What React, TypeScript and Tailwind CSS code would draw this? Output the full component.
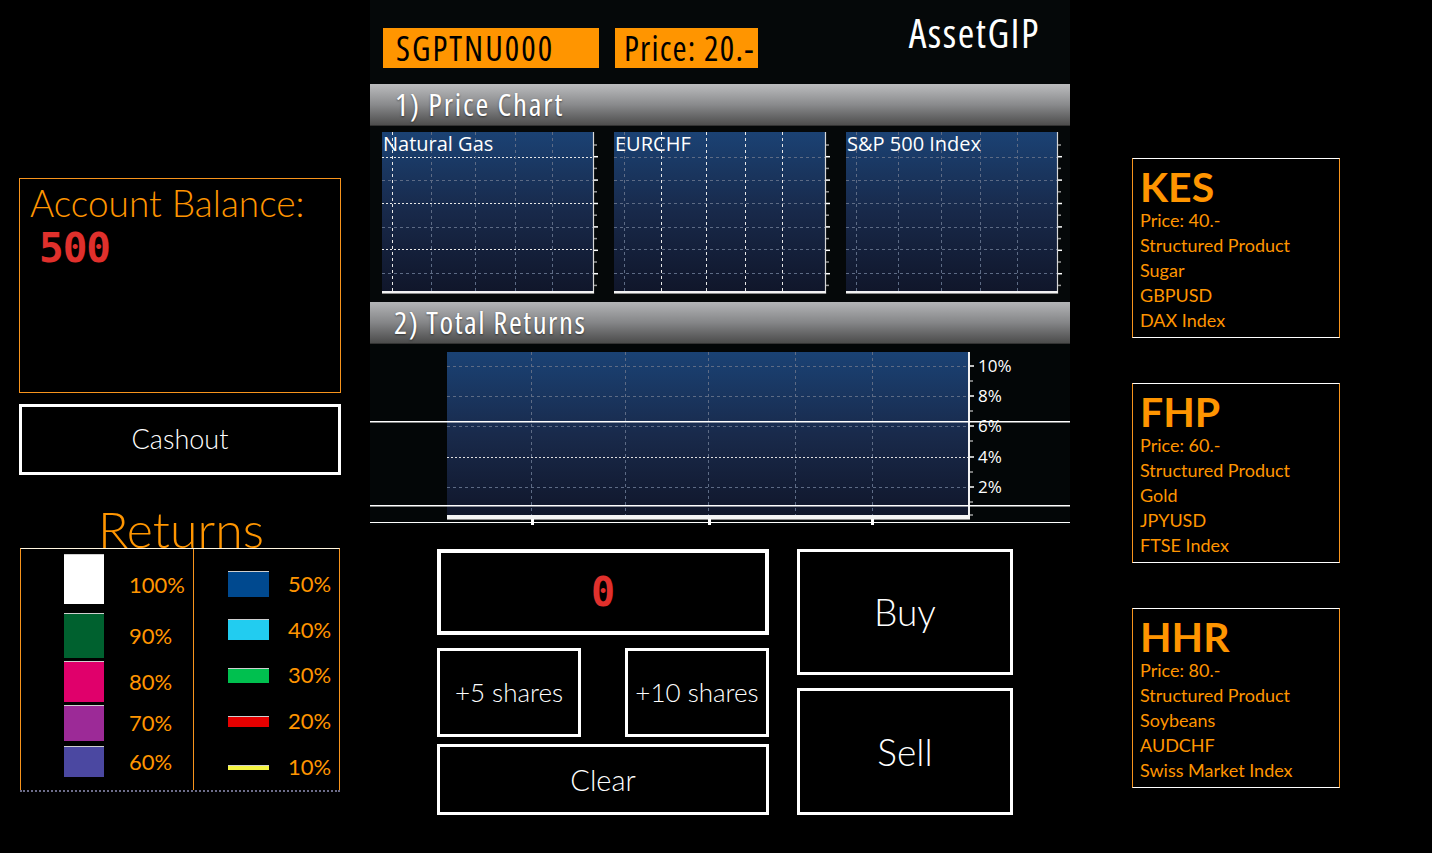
import React from "react";

type ChartProps = {
  id: string;
  label: string;
  brightH: boolean[];
  vx: number[];
  brightV: boolean[];
};

const H_LINES = [25, 48, 71, 95, 117, 141];

function PriceChart({ id, label, brightH, vx, brightV }: ChartProps) {
  const ticks: number[] = [];
  for (let i = 0; i < 13; i++) ticks.push(13 + i * 11.7);
  return (
    <div className="relative w-[216px] h-[162px]">
      <svg width="216" height="162" viewBox="0 0 216 162" className="block">
        <defs>
          <linearGradient id={id} x1="0" y1="0" x2="0" y2="1">
            <stop offset="0" stopColor="#1b4274" />
            <stop offset="0.5" stopColor="#18294a" />
            <stop offset="1" stopColor="#10162a" />
          </linearGradient>
        </defs>
        <rect x="0" y="0" width="211" height="160" fill={`url(#${id})`} />
        {H_LINES.map((y, i) => (
          <line
            key={"h" + i}
            x1="0"
            x2="211"
            y1={y + 0.5}
            y2={y + 0.5}
            stroke={brightH[i] ? "#e8e8e8" : "#5d6b85"}
            strokeWidth="1"
            strokeDasharray={brightH[i] ? "2 2" : "3 3"}
          />
        ))}
        {vx.map((x, i) => (
          <line
            key={"v" + i}
            x1={x + 0.5}
            x2={x + 0.5}
            y1="0"
            y2="160"
            stroke={brightV[i] ? "#e8e8e8" : "#5d6b85"}
            strokeWidth="1"
            strokeDasharray="3 3"
          />
        ))}
        <line x1="211.5" x2="211.5" y1="0" y2="162" stroke="#d8d8d8" strokeWidth="1.2" />
        {ticks.map((y, i) => (
          <line
            key={"t" + i}
            x1="212"
            x2={i % 2 === 0 ? 215 : 216}
            y1={y}
            y2={y}
            stroke={i % 2 === 0 ? "#9a9a9a" : "#ffffff"}
            strokeWidth="1.5"
          />
        ))}
        <rect x="0" y="159" width="212" height="2" fill="#f2f2f2" />
        <rect x="0" y="161" width="212" height="1" fill="#8a8a8a" />
      </svg>
      <div className="absolute left-[1px] top-[0px] text-white text-[20px] leading-[24px] font-['Open_Sans',sans-serif] font-medium whitespace-nowrap">
        {label}
      </div>
    </div>
  );
}

function ReturnsChart() {
  const labels = [
    { y: 22, t: "10%" },
    { y: 52, t: "8%" },
    { y: 82, t: "6%" },
    { y: 113, t: "4%" },
    { y: 143, t: "2%" },
  ];
  const minor = [37, 67, 97, 128, 158, 171];
  const vx = [161, 255, 338, 425, 502];
  return (
    <svg width="700" height="181" viewBox="0 0 700 181" className="block">
      <defs>
        <linearGradient id="retgrad" x1="0" y1="0" x2="0" y2="1">
          <stop offset="0" stopColor="#1a4275" />
          <stop offset="0.5" stopColor="#192a4b" />
          <stop offset="1" stopColor="#10162a" />
        </linearGradient>
      </defs>
      <rect x="0" y="0" width="700" height="181" fill="#030607" />
      <rect x="77" y="8" width="521" height="165" fill="url(#retgrad)" />
      {[22, 52, 82, 143].map((y) => (
        <line key={"rh" + y} x1="77" x2="598" y1={y + 0.5} y2={y + 0.5} stroke="#5d6b85" strokeDasharray="3 3" />
      ))}
      <line x1="77" x2="598" y1="113.5" y2="113.5" stroke="#e0e0e0" strokeDasharray="2 2" />
      {vx.map((x) => (
        <line key={"rv" + x} x1={x + 0.5} x2={x + 0.5} y1="8" y2="172" stroke="#5d6b85" strokeDasharray="3 3" />
      ))}
      <rect x="598" y="8" width="2" height="168" fill="#f2f2f2" />
      {labels.map((l) => (
        <g key={l.t}>
          <line x1="600" x2="604" y1={l.y} y2={l.y} stroke="#ffffff" strokeWidth="1.5" />
          <text
            x="608"
            y={l.y + 6}
            fill="#ffffff"
            fontSize="17"
            fontFamily="'Open Sans', sans-serif"
            style={{ fontStretch: "90%" }}
          >
            {l.t}
          </text>
        </g>
      ))}
      {minor.map((y) => (
        <line key={"m" + y} x1="600" x2="603" y1={y} y2={y} stroke="#a0a0a0" strokeWidth="1.5" />
      ))}
      <rect x="77" y="171" width="523" height="4" fill="#f4f4f4" />
      <rect x="77" y="175" width="523" height="1" fill="#8a8a8a" />
      {[161, 338, 501].map((x) => (
        <rect key={"bt" + x} x={x} y="175" width="3" height="6" fill="#ffffff" />
      ))}
      <rect x="0" y="77" width="700" height="1.5" fill="#ffffff" />
      <rect x="0" y="161" width="700" height="1.5" fill="#ffffff" />
      <rect x="0" y="178" width="700" height="1" fill="#ffffff" />
    </svg>
  );
}

function AssetCard({ code, lines }: { code: string; lines: string[] }) {
  return (
    <div className="h-[180px] border-y border-y-white border-x border-x-[#f7941d] pl-[7px] pt-[7px] text-[#ff9500]">
      <div className="text-[41px] leading-[42px] font-bold font-['Lato',sans-serif]">{code}</div>
      <div className="flex flex-col">
        {lines.map((l) => (
          <div key={l} className="text-[18px] leading-[25px] font-['Lato',sans-serif] whitespace-nowrap">
            {l}
          </div>
        ))}
      </div>
    </div>
  );
}

const legendLeft = [
  { c: "#ffffff", h: 50, mt: 5, t: "100%", lp: 12 },
  { c: "#00612f", h: 45, mt: 9, t: "90%", lp: 0 },
  { c: "#e0006b", h: 41, mt: 3, t: "80%", lp: 0 },
  { c: "#9c2a97", h: 36, mt: 3, t: "70%", lp: 0 },
  { c: "#4b48a1", h: 31, mt: 5, t: "60%", lp: 0 },
];

const legendRight = [
  { c: "#00498f", h: 26, t: "50%" },
  { c: "#22ccf0", h: 21, t: "40%" },
  { c: "#00c04f", h: 15, t: "30%" },
  { c: "#e60000", h: 11, t: "20%" },
  { c: "#f5f542", h: 5, t: "10%" },
];

export default function App() {
  const cond = "font-['Open_Sans',sans-serif] [font-stretch:75%]";
  return (
    <div className="w-[1432px] h-[853px] bg-black flex overflow-hidden font-['Lato',sans-serif]">
      {/* Left column */}
      <div className="ml-[19px] w-[322px] pt-[178px] flex flex-col shrink-0">
        <div className="h-[215px] border border-[#f7941d] pl-[10px] pt-[2px]">
          <div className="text-[#ff9500] text-[37px] font-light leading-[44px] whitespace-nowrap">Account Balance:</div>
          <div className="ml-[9px] mt-[4px] text-[#e0302c] font-['DejaVu_Sans_Mono',monospace] font-bold text-[41px] leading-[38px] tracking-[-1px]">
            500
          </div>
        </div>
        <button className="mt-[11px] h-[71px] bg-black border-[3px] border-white text-white text-[27px] font-light flex items-center justify-center">
          Cashout
        </button>
        <div className="h-[73px] flex items-end justify-center">
          <span className="relative top-[9px] z-10 ml-[2px] text-[#ff9500] text-[50px] font-light leading-[56px]">Returns</span>
        </div>
        <div className="ml-[1px] w-[320px] h-[244px] flex flex-col">
          <div className="h-[242px] border-t border-t-[#fff6e0] border-x border-x-[#f7941d] flex">
            <div className="w-[173px] border-r border-r-[#f7941d] pl-[43px] flex flex-col">
              {legendLeft.map((r) => (
                <div key={r.t} className="flex items-center" style={{ marginTop: r.mt }}>
                  <div className="w-[40px] border-t border-t-[#cfcfcf]" style={{ height: r.h, background: r.c }} />
                  <div className="ml-[25px] text-[#ff9500] text-[22px] leading-[26px]" style={{ paddingTop: r.lp }}>
                    {r.t}
                  </div>
                </div>
              ))}
            </div>
            <div className="flex-1 pl-[34px] pt-[12px] flex flex-col">
              {legendRight.map((r) => (
                <div key={r.t} className="h-[46px] flex items-center">
                  <div className="w-[41px] border-t border-t-[#cfcfcf]" style={{ height: r.h, background: r.c }} />
                  <div className="ml-[19px] text-[#ff9500] text-[22px] leading-[26px]">{r.t}</div>
                </div>
              ))}
            </div>
          </div>
          <div className="h-[2px] border-b-2 border-dotted border-b-[#6d6d8a]" />
        </div>
      </div>

      {/* Center column */}
      <div className="ml-[29px] w-[700px] shrink-0 flex flex-col">
        <div className="h-[84px] bg-[#050809] flex items-start">
          <div className={`ml-[13px] mt-[28px] w-[216px] h-[40px] bg-[#ff9500] text-black text-[34px] tracking-[2px] leading-[40px] pl-[13px] whitespace-nowrap ${cond}`}>
            SGPTNU000
          </div>
          <div className={`ml-[16px] mt-[28px] w-[143px] h-[40px] bg-[#ff9500] text-black text-[34px] tracking-[1.2px] leading-[40px] pl-[9px] whitespace-nowrap ${cond}`}>
            Price: 20.-
          </div>
          <div className={`ml-auto mr-[30px] mt-[10px] text-white text-[40px] tracking-[1.5px] leading-[46px] font-medium ${cond}`}>AssetGIP</div>
        </div>
        <div className="h-[42px] bg-gradient-to-b from-[#bcbdbf] via-[#8a8b8d] to-[#4e4e4e] border-b border-b-[#333] flex items-center pl-[25px]">
          <span className={`text-white text-[31px] tracking-[1.8px] font-medium [text-shadow:0_1px_2px_rgba(0,0,0,0.5)] ${cond}`}>1) Price Chart</span>
        </div>
        <div className="h-[176px] bg-[#050809] flex pt-[6px] pl-[12px] gap-[16px]">
          <PriceChart
            id="g1"
            label="Natural Gas"
            brightH={[true, false, true, false, true, false]}
            vx={[10, 49, 93, 133, 170]}
            brightV={[true, false, false, false, false]}
          />
          <PriceChart
            id="g2"
            label="EURCHF"
            brightH={[false, false, false, false, false, false]}
            vx={[10, 47, 92, 131, 168]}
            brightV={[false, true, true, true, true]}
          />
          <PriceChart
            id="g3"
            label="S&P 500 Index"
            brightH={[false, false, false, false, false, false]}
            vx={[10, 52, 95, 134, 171]}
            brightV={[false, false, false, false, false]}
          />
        </div>
        <div className="h-[42px] bg-gradient-to-b from-[#b4b5b7] via-[#858688] to-[#4c4c4c] border-b border-b-[#333] flex items-center pl-[24px]">
          <span className={`text-white text-[31px] tracking-[1.5px] font-medium [text-shadow:0_1px_2px_rgba(0,0,0,0.5)] ${cond}`}>2) Total Returns</span>
        </div>
        <ReturnsChart />

        {/* Controls */}
        <div className="mt-[24px] ml-[67px] flex gap-[28px]">
          <div className="w-[332px] flex flex-col">
            <div className="h-[86px] border-[4px] border-white bg-black flex items-center justify-center">
              <span className="text-[#e0302c] font-['DejaVu_Sans_Mono',monospace] font-bold text-[40px] leading-[40px]">0</span>
            </div>
            <div className="mt-[13px] flex justify-between">
              <button className="w-[144px] h-[89px] bg-black border-[3px] border-white text-white text-[26px] font-light flex items-center justify-center whitespace-nowrap">
                +5 shares
              </button>
              <button className="w-[144px] h-[89px] bg-black border-[3px] border-white text-white text-[26px] font-light flex items-center justify-center whitespace-nowrap">
                +10 shares
              </button>
            </div>
            <button className="mt-[7px] h-[71px] bg-black border-[3px] border-white text-white text-[29px] font-light flex items-center justify-center">
              Clear
            </button>
          </div>
          <div className="w-[216px] flex flex-col">
            <button className="h-[126px] bg-black border-[3px] border-white text-white text-[37px] font-light flex items-center justify-center">
              Buy
            </button>
            <button className="mt-[13px] h-[127px] bg-black border-[3px] border-white text-white text-[37px] font-light flex items-center justify-center">
              Sell
            </button>
          </div>
        </div>
      </div>

      {/* Right column */}
      <div className="ml-[62px] w-[208px] pt-[158px] flex flex-col gap-[45px] shrink-0">
        <AssetCard code="KES" lines={["Price: 40.-", "Structured Product", "Sugar", "GBPUSD", "DAX Index"]} />
        <AssetCard code="FHP" lines={["Price: 60.-", "Structured Product", "Gold", "JPYUSD", "FTSE Index"]} />
        <AssetCard code="HHR" lines={["Price: 80.-", "Structured Product", "Soybeans", "AUDCHF", "Swiss Market Index"]} />
      </div>
    </div>
  );
}
